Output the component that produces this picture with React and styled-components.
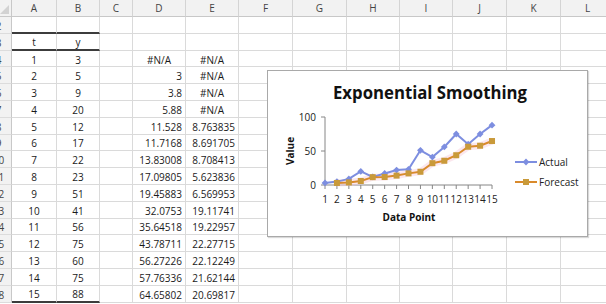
import React from 'react';
import styled, { createGlobalStyle } from 'styled-components';

const GlobalStyle = createGlobalStyle`
  html, body {
    margin: 0;
    padding: 0;
    background: #fff;
    overflow: hidden;
  }
  body {
    font-family: 'Open Sans', 'Liberation Sans', sans-serif;
  }
`;

const columns = [
  { name: 'A', width: 45 },
  { name: 'B', width: 43 },
  { name: 'C', width: 33 },
  { name: 'D', width: 53 },
  { name: 'E', width: 53 },
  { name: 'F', width: 54 },
  { name: 'G', width: 54 },
  { name: 'H', width: 53 },
  { name: 'I', width: 53 },
  { name: 'J', width: 54 },
  { name: 'K', width: 54 },
  { name: 'L', width: 54 },
];

const actual = [3, 5, 9, 20, 12, 17, 22, 23, 51, 41, 56, 75, 60, 75, 88];
const forecast = [
  null, 3, 3.8, 5.88, 11.528, 11.7168, 13.83008, 17.09805, 19.45883,
  32.0753, 35.64518, 43.78711, 56.27226, 57.76336, 64.65802,
];
const errors = [
  null, null, null, null, '8.763835', '8.691705', '8.708413', '5.623836',
  '6.569953', '19.11741', '19.22957', '22.27715', '22.12249', '21.62144',
  '20.69817',
];

const Sheet = styled.div`
  position: relative;
  margin-left: -14px;
  display: grid;
  grid-template-columns: 26px ${columns.map((c) => `${c.width}px`).join(' ')};
  grid-template-rows: 17px;
  grid-auto-rows: 16.8px;
  font-size: 10px;
  color: #1a1a1a;
`;

const Corner = styled.div`
  position: relative;
  background: #f2f2f2;
  border-right: 1px solid #c8c8c8;
  border-bottom: 1px solid #c8c8c8;
  box-sizing: border-box;

  &::after {
    content: '';
    position: absolute;
    right: 2px;
    bottom: 2px;
    border-left: 9px solid transparent;
    border-bottom: 9px solid #d2d2d2;
  }
`;

const ColHead = styled.div`
  display: flex;
  align-items: center;
  justify-content: center;
  background: #f2f2f2;
  color: #444;
  border-right: 1px solid #d4d4d4;
  border-bottom: 1px solid #c8c8c8;
  box-sizing: border-box;
`;

const RowHead = styled.div`
  display: flex;
  align-items: center;
  justify-content: center;
  padding-top: 2px;
  background: #f2f2f2;
  color: #444;
  border-right: 1px solid #c8c8c8;
  border-bottom: 1px solid #dcdcdc;
  box-sizing: border-box;
`;

const Cell = styled.div`
  display: flex;
  align-items: center;
  justify-content: ${(p) =>
    p.$align === 'right' ? 'flex-end' : p.$align === 'center' ? 'center' : 'flex-start'};
  padding: 2px 3px 0;
  border-right: 1px solid #dadada;
  border-bottom: ${(p) => (p.$rule ? '2px solid #3c3c3c' : '1px solid #dadada')};
  box-sizing: border-box;
  white-space: nowrap;
  overflow: hidden;
`;

const ChartBox = styled.div`
  position: absolute;
  left: 281px;
  top: 70px;
  width: 321px;
  height: 167px;
  background: #fff;
  border: 1px solid #a9a9a9;
  box-shadow: 1px 1px 1px rgba(0, 0, 0, 0.15);
  box-sizing: border-box;
`;

const X0 = 57;
const STEP = 11.93;
const Y0 = 114;
const SCALE = 0.68;
const px = (i) => X0 + i * STEP;
const py = (v) => Y0 - v * SCALE;

function Chart() {
  const actualPts = actual.map((v, i) => `${px(i)},${py(v)}`).join(' ');
  const forecastPts = forecast
    .map((v, i) => (v == null ? null : `${px(i)},${py(v)}`))
    .filter(Boolean)
    .join(' ');

  return (
    <svg width="319" height="165" viewBox="0 0 319 165">
      <text
        x="162"
        y="28"
        textAnchor="middle"
        fontSize="17"
        fontWeight="700"
        fill="#111"
        textLength="194"
        lengthAdjust="spacingAndGlyphs"
      >
        Exponential Smoothing
      </text>

      {/* value axis */}
      <line x1={X0} y1={py(100)} x2={X0} y2={Y0} stroke="#868686" strokeWidth="1" />
      {[0, 50, 100].map((v) => (
        <g key={v}>
          <line x1={X0 - 4} y1={py(v)} x2={X0} y2={py(v)} stroke="#868686" />
          <text x={X0 - 9} y={py(v) + 3.5} textAnchor="end" fontSize="10" fill="#222">
            {v}
          </text>
        </g>
      ))}
      <text
        transform={`translate(26 80) rotate(-90)`}
        textAnchor="middle"
        fontSize="10"
        fontWeight="700"
        fill="#111"
      >
        Value
      </text>

      {/* category axis */}
      <line x1={X0} y1={Y0} x2={px(14)} y2={Y0} stroke="#868686" />
      {actual.map((_, i) => (
        <g key={i}>
          <line x1={px(i)} y1={Y0} x2={px(i)} y2={Y0 + 4} stroke="#868686" />
          <text x={px(i)} y={Y0 + 18} textAnchor="middle" fontSize="10" fill="#222">
            {i + 1}
          </text>
        </g>
      ))}
      <text x="141" y="150" textAnchor="middle" fontSize="10" fontWeight="700" fill="#111">
        Data Point
      </text>

      {/* series */}
      <polyline points={forecastPts} fill="none" stroke="#f7c9d9" strokeWidth="7" opacity="0.45" />
      <polyline points={actualPts} fill="none" stroke="#7d8ee0" strokeWidth="2" />
      {actual.map((v, i) => (
        <rect
          key={i}
          x={px(i) - 2.4}
          y={py(v) - 2.4}
          width="4.8"
          height="4.8"
          fill="#7d8ee0"
          transform={`rotate(45 ${px(i)} ${py(v)})`}
        />
      ))}
      <polyline points={forecastPts} fill="none" stroke="#d98a2c" strokeWidth="2" />
      {forecast.map((v, i) =>
        v == null ? null : (
          <rect key={i} x={px(i) - 3} y={py(v) - 3} width="6" height="6" fill="#c99a3a" />
        )
      )}

      {/* legend */}
      <line x1="247" y1="91" x2="269" y2="91" stroke="#7d8ee0" strokeWidth="2" />
      <rect x="255.6" y="88.6" width="4.8" height="4.8" fill="#7d8ee0" transform="rotate(45 258 91)" />
      <text x="271" y="94.5" fontSize="10" fill="#222">
        Actual
      </text>
      <line x1="247" y1="111" x2="269" y2="111" stroke="#d98a2c" strokeWidth="2" />
      <rect x="255" y="108" width="6" height="6" fill="#c99a3a" />
      <text x="271" y="114.5" fontSize="10" fill="#222">
        Forecast
      </text>
    </svg>
  );
}

function Row({ num, cells }) {
  return (
    <>
      <RowHead>{num}</RowHead>
      {columns.map((c, i) => {
        const cell = cells[i] || {};
        return (
          <Cell key={c.name} $align={cell.align} $rule={cell.rule}>
            {cell.text}
          </Cell>
        );
      })}
    </>
  );
}

export default function App() {
  const rows = [
    { num: 2, cells: [{ rule: true }, { rule: true }] },
    {
      num: 3,
      cells: [
        { text: 't', align: 'center', rule: true },
        { text: 'y', align: 'center', rule: true },
      ],
    },
    ...actual.map((y, i) => {
      const last = i === actual.length - 1;
      const f = forecast[i];
      return {
        num: i + 4,
        cells: [
          { text: i + 1, align: 'center', rule: last },
          { text: y, align: 'center', rule: last },
          {},
          f == null ? { text: '#N/A', align: 'center' } : { text: String(f), align: 'right' },
          errors[i] == null
            ? { text: '#N/A', align: 'center' }
            : { text: errors[i], align: 'right' },
        ],
      };
    }),
  ];

  return (
    <>
      <GlobalStyle />
      <Sheet>
        <Corner />
        {columns.map((c) => (
          <ColHead key={c.name}>{c.name}</ColHead>
        ))}
        {rows.map((r) => (
          <Row key={r.num} num={r.num} cells={r.cells} />
        ))}
        <ChartBox>
          <Chart />
        </ChartBox>
      </Sheet>
    </>
  );
}
